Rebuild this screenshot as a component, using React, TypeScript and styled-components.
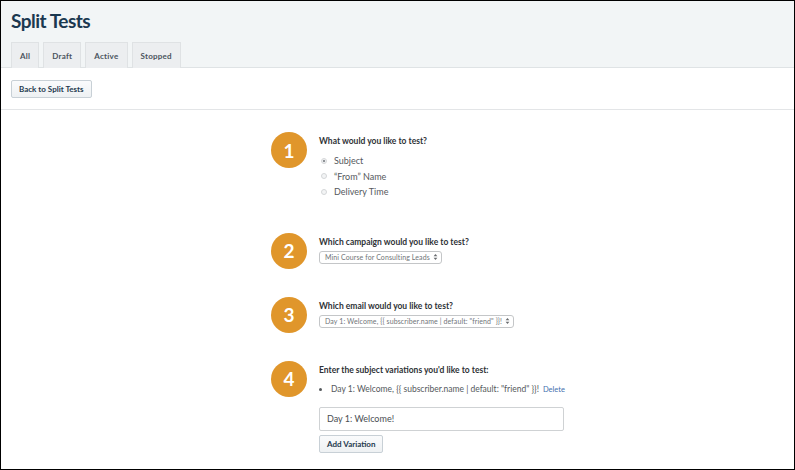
import React, { FC } from "react";
import styled, { createGlobalStyle } from "styled-components";

const GlobalStyle = createGlobalStyle`
  html, body {
    margin: 0;
    padding: 0;
    background: #ffffff;
  }
  * {
    box-sizing: border-box;
  }
`;

const tabs = ["All", "Draft", "Active", "Stopped"];
const testOptions = ["Subject", "\u201CFrom\u201D Name", "Delivery Time"];

const App: FC = () => {
  return (
    <Frame>
      <GlobalStyle />
      <Header>
        <Title>Split Tests</Title>
        <Tabs>
          {tabs.map((tab) => (
            <Tab key={tab}>{tab}</Tab>
          ))}
        </Tabs>
      </Header>
      <Toolbar>
        <Button>Back to Split Tests</Button>
      </Toolbar>
      <Main>
        <Steps>
          <StepRow>
            <Circle>1</Circle>
            <StepBody>
              <Question>What would you like to test?</Question>
              <RadioList>
                {testOptions.map((option, i) => (
                  <RadioRow key={option}>
                    <Radio checked={i === 0} />
                    {option}
                  </RadioRow>
                ))}
              </RadioList>
            </StepBody>
          </StepRow>

          <StepRow>
            <Circle>2</Circle>
            <StepBody>
              <Question>Which campaign would you like to test?</Question>
              <SelectBox>
                Mini Course for Consulting Leads
                <Arrows />
              </SelectBox>
            </StepBody>
          </StepRow>

          <StepRow>
            <Circle>3</Circle>
            <StepBody>
              <Question>Which email would you like to test?</Question>
              <SelectBox>
                Day 1: Welcome, {"{{"} subscriber.name | default: "friend" {"}}"}!
                <Arrows />
              </SelectBox>
            </StepBody>
          </StepRow>

          <StepRow>
            <Circle>4</Circle>
            <StepBody>
              <Question>Enter the subject variations you'd like to test:</Question>
              <Variations>
                <Variation>
                  Day 1: Welcome, {"{{"} subscriber.name | default: "friend" {"}}"}!
                  <DeleteLink>Delete</DeleteLink>
                </Variation>
              </Variations>
              <TextInput defaultValue="Day 1: Welcome!" />
              <AddButton>Add Variation</AddButton>
            </StepBody>
          </StepRow>
        </Steps>
      </Main>
    </Frame>
  );
};

const Arrows: FC = () => (
  <svg width="5" height="8" viewBox="0 0 5 8" style={{ marginLeft: 3 }}>
    <path d="M0.6 3.2 L2.5 1 L4.4 3.2 Z" fill="#6a6d70" />
    <path d="M0.6 4.8 L2.5 7 L4.4 4.8 Z" fill="#6a6d70" />
  </svg>
);

export default App;

const Frame = styled.div`
  width: 795px;
  height: 470px;
  border: 1px solid #000;
  overflow: hidden;
  background: #fff;
  font-family: "Lato", "Helvetica Neue", Arial, sans-serif;
  color: #4c4f52;
`;

const Header = styled.header`
  height: 67px;
  background: #f2f5f6;
  border-bottom: 1px solid #dfe3e5;
  padding: 8px 0 0 10px;
  display: flex;
  flex-direction: column;
  justify-content: space-between;
`;

const Title = styled.h1`
  margin: 0;
  font-size: 19px;
  font-weight: 700;
  letter-spacing: -0.5px;
  color: #1b3850;
  line-height: 24px;
`;

const Tabs = styled.nav`
  display: flex;
  gap: 4px;
  margin-bottom: -1px;
`;

const Tab = styled.div`
  height: 26px;
  padding: 0 8px;
  display: flex;
  align-items: center;
  background: #eceef0;
  border: 1px solid #dfe2e4;
  border-bottom: none;
  font-size: 8px;
  font-weight: 700;
  letter-spacing: 0.25px;
  color: #4a545d;
`;

const Toolbar = styled.div`
  height: 42px;
  padding: 12px 0 0 10px;
  display: flex;
  align-items: flex-start;
  border-bottom: 1px solid #e3e5e7;
`;

const Button = styled.button`
  height: 18px;
  padding: 0 7px;
  border: 1px solid #c8d0d6;
  border-radius: 2px;
  background: linear-gradient(#fafbfc, #eef1f3);
  font-family: inherit;
  font-size: 8px;
  font-weight: 700;
  color: #243a4e;
  cursor: pointer;
`;

const Main = styled.main`
  display: flex;
  justify-content: flex-start;
  padding: 22px 0 0 270px;
`;

const Steps = styled.div`
  display: flex;
  flex-direction: column;
`;

const StepRow = styled.section`
  display: flex;
  align-items: flex-start;
  gap: 12px;
`;

const Circle = styled.div`
  width: 36px;
  height: 36px;
  flex: none;
  border-radius: 50%;
  background: #e0962b;
  color: #fff;
  font-size: 19px;
  font-weight: 700;
  display: flex;
  align-items: center;
  justify-content: center;
`;

const StepBody = styled.div`
  padding: 3px 0 33px;
  display: flex;
  flex-direction: column;
  align-items: flex-start;
`;

const Question = styled.h2`
  margin: 0;
  font-size: 8.5px;
  font-weight: 700;
  line-height: 12px;
  color: #2e3236;
`;

const RadioList = styled.div`
  margin-top: 6px;
  display: flex;
  flex-direction: column;
`;

const RadioRow = styled.label`
  display: flex;
  align-items: center;
  height: 15.5px;
  padding-left: 2px;
  font-size: 9px;
  color: #55595d;
`;

const Radio = styled.span<{ checked?: boolean }>`
  width: 6px;
  height: 6px;
  margin-right: 7px;
  border-radius: 50%;
  border: 1px solid #d4d6d8;
  background: ${({ checked }) =>
    checked ? "radial-gradient(circle, #8e9296 0 1.3px, #f3f4f5 1.6px)" : "#f3f4f5"};
`;

const SelectBox = styled.div`
  margin-top: 3px;
  height: 13px;
  padding: 0 3px 0 5px;
  display: inline-flex;
  align-items: center;
  border: 1px solid #c4c6c8;
  border-radius: 3px;
  background: #fff;
  font-size: 7px;
  letter-spacing: 0.1px;
  color: #707478;
  white-space: nowrap;
`;

const Variations = styled.ul`
  margin: 7px 0 0;
  padding: 0 0 0 12px;
  font-size: 8.5px;
  color: #55595d;
`;

const Variation = styled.li`
  line-height: 13px;
  white-space: nowrap;
`;

const DeleteLink = styled.a`
  margin-left: 4px;
  font-size: 7.5px;
  color: #3f6fae;
  cursor: pointer;
`;

const TextInput = styled.input`
  margin-top: 11px;
  width: 245px;
  height: 24px;
  padding: 0 7px;
  border: 1px solid #cfd2d4;
  border-radius: 2px;
  font-family: inherit;
  font-size: 9px;
  color: #4a4e52;
  outline: none;
`;

const AddButton = styled(Button)`
  margin-top: 4px;
`;
